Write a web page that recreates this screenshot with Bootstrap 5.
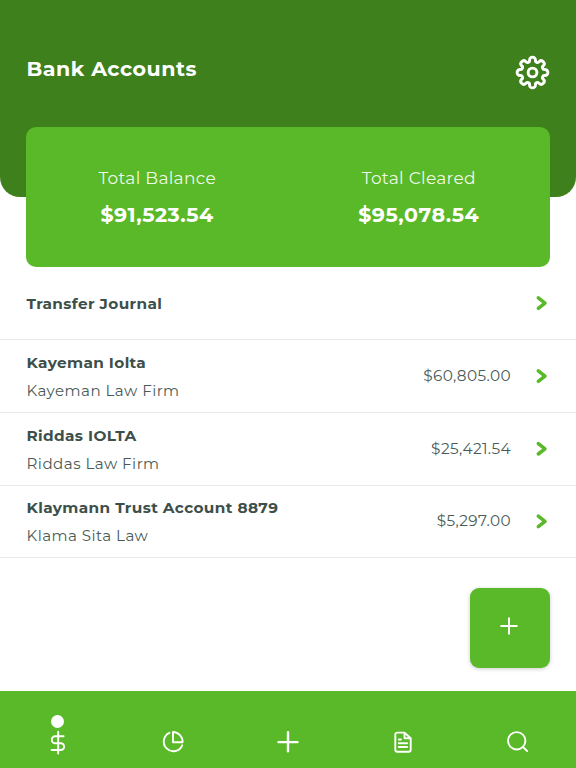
<!DOCTYPE html>
<html lang="en">
<head>
<meta charset="utf-8">
<meta name="viewport" content="width=device-width, initial-scale=1">
<title>Bank Accounts</title>
<link href="https://cdn.jsdelivr.net/npm/bootstrap@5.3.0/dist/css/bootstrap.min.css" rel="stylesheet">
<style>
:root{--leaf:#59b928;--forest:#3e801c;--ink:#3d4f4a}
body{font-family:Montserrat,Inter,sans-serif;color:var(--ink);height:768px;overflow:hidden;background:#fff}
svg{display:block;fill:none;stroke:currentColor;stroke-linecap:round;stroke-linejoin:round;overflow:visible}
.hero{background:var(--forest);height:197px;border-radius:0 0 20px 20px;padding:55px 26px 0 26.5px}
.page-title{font-size:20.6px;font-weight:700;line-height:28px;letter-spacing:.53px}
.totals{background:var(--leaf);height:140px;border-radius:10px;margin:-70px 26.4px 0;padding-top:38px}
.total-label{font-size:17px;font-weight:400;line-height:26px;letter-spacing:.3px;color:rgba(255,255,255,.92)}
.total-sum{font-size:20.6px;font-weight:700;line-height:28px;margin-top:10px;letter-spacing:.55px}
.account{height:73px;padding:0 28px 0 26.5px;border-bottom:1px solid #e8eaea}
.account:nth-child(4){height:72px}
.account-text{padding-top:1px}
.account-name{font-size:15.3px;font-weight:700;line-height:24px;letter-spacing:.37px}
.account-firm{font-size:15.1px;line-height:24px;margin-top:4px;letter-spacing:.46px;color:#495b56}
.amount{font-size:15.3px;letter-spacing:.38px;margin-right:24px;color:#495b56}
.go{color:var(--leaf);stroke-width:3.5}
.add{background:var(--leaf);width:80px;height:80px;border-radius:9px;margin:30px 26.5px 0 0;box-shadow:0 1px 4px rgba(0,0,0,.2);padding:0 1px 4px 0}
.tabs{background:var(--leaf);height:77px}
.tabs svg{stroke-width:1.9}
.tab{padding-top:24px}
.dot{width:13px;height:13px;margin-bottom:2px}
</style>
<script src="https://cdn.jsdelivr.net/npm/bootstrap@5.3.0/dist/js/bootstrap.bundle.min.js"></script>
</head>
<body class="d-flex flex-column">
<header class="hero text-white d-flex justify-content-between align-items-start flex-shrink-0">
  <h1 class="page-title mb-0">Bank Accounts</h1>
  <svg width="35" height="35" viewBox="-17.5 -17.5 35 35" stroke-width="2.9" aria-label="Settings"><path d="M-3-12.4A3 3 0 0 1 3-12.4A2 2 0 0 0 6.65-10.89A3 3 0 0 1 10.89-6.65A2 2 0 0 0 12.4-3A3 3 0 0 1 12.4 3A2 2 0 0 0 10.89 6.65A3 3 0 0 1 6.65 10.89A2 2 0 0 0 3 12.4A3 3 0 0 1-3 12.4A2 2 0 0 0-6.65 10.89A3 3 0 0 1-10.89 6.65A2 2 0 0 0-12.4 3A3 3 0 0 1-12.4-3A2 2 0 0 0-10.89-6.65A3 3 0 0 1-6.65-10.89A2 2 0 0 0-3-12.4Z"/><circle r="4.4"/></svg>
</header>
<section class="totals row gx-0 text-white text-center flex-shrink-0">
  <div class="col-6"><div class="total-label">Total Balance</div><div class="total-sum">$91,523.54</div></div>
  <div class="col-6"><div class="total-label">Total Cleared</div><div class="total-sum">$95,078.54</div></div>
</section>
<main class="flex-grow-1">
  <div class="account d-flex align-items-center"><div class="account-text me-auto"><div class="account-name">Transfer Journal</div></div><svg class="go" width="13" height="16" viewBox="0 0 13 16"><path d="M3.3 2.9l6.7 5.2-6.7 5.2"/></svg></div>
  <div class="account d-flex align-items-center"><div class="account-text me-auto"><div class="account-name">Kayeman Iolta</div><div class="account-firm">Kayeman Law Firm</div></div><span class="amount">$60,805.00</span><svg class="go" width="13" height="16" viewBox="0 0 13 16"><path d="M3.3 2.9l6.7 5.2-6.7 5.2"/></svg></div>
  <div class="account d-flex align-items-center"><div class="account-text me-auto"><div class="account-name">Riddas IOLTA</div><div class="account-firm">Riddas Law Firm</div></div><span class="amount">$25,421.54</span><svg class="go" width="13" height="16" viewBox="0 0 13 16"><path d="M3.3 2.6l6.7 5.2-6.7 5.2"/></svg></div>
  <div class="account d-flex align-items-center"><div class="account-text me-auto"><div class="account-name">Klaymann Trust Account 8879</div><div class="account-firm">Klama Sita Law</div></div><span class="amount">$5,297.00</span><svg class="go" width="13" height="16" viewBox="0 0 13 16"><path d="M3.3 2.2l6.7 5.2-6.7 5.2"/></svg></div>
  <div class="add ms-auto text-white d-flex align-items-center justify-content-center"><svg width="18" height="18" viewBox="0 0 18 18" stroke-width="2"><path d="M9 1.2v15.6M1.2 9h15.6"/></svg></div>
</main>
<nav class="tabs row gx-0 text-white flex-shrink-0">
  <div class="col tab d-flex flex-column align-items-center"><div class="dot rounded-circle bg-white"></div><svg width="24" height="24" viewBox="0 0 24 24"><path d="M12.2 1.7v21.8M17.6 6.2H9.3a3.5 3.5 0 0 0 0 7.1h5.5a3.3 3.3 0 0 1 0 6.7H5.6"/></svg></div>
  <div class="col tab d-flex flex-column align-items-center"><div class="dot"></div><svg width="24" height="24" viewBox="0 0 24 24"><path d="M8.5 2.8a9.6 9.6 0 1 0 12.7 12.5M12 2v10.2h9.6A9.8 9.8 0 0 0 12 2z"/></svg></div>
  <div class="col tab d-flex flex-column align-items-center"><div class="dot"></div><svg width="24" height="24" viewBox="0 0 24 24"><path stroke-width="2.4" d="M12 2.3v19M2.5 12.1h19"/></svg></div>
  <div class="col tab d-flex flex-column align-items-center"><div class="dot"></div><svg width="24" height="24" viewBox="0 0 24 24"><path d="M13.5 2.6H6.3a2 2 0 0 0-2 2v15.2a2 2 0 0 0 2 2h11.4a2 2 0 0 0 2-2V8.3zM13.5 2.6v5.7h6.2M7.8 9.5H10M7.8 13.2h8.4M7.8 17h8.4"/></svg></div>
  <div class="col tab d-flex flex-column align-items-center"><div class="dot"></div><svg width="24" height="24" viewBox="0 0 24 24"><circle cx="10.7" cy="10.8" r="8.7"/><path d="M17 17l4.2 4.2"/></svg></div>
</nav>
</body>
</html>
